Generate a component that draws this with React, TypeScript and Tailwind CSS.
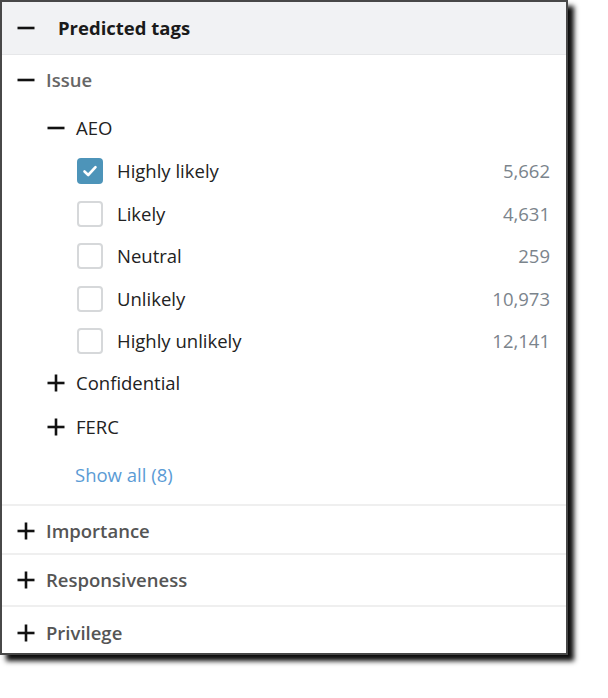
import React from "react";

const Minus = ({ className = "" }: { className?: string }) => (
  <svg width="18" height="18" viewBox="0 0 18 18" className={className}>
    <line x1="0.5" y1="9" x2="17.5" y2="9" stroke="#111" strokeWidth="2.6" />
  </svg>
);

const Plus = ({ className = "" }: { className?: string }) => (
  <svg width="18" height="18" viewBox="0 0 18 18" className={className}>
    <line x1="0.5" y1="9" x2="17.5" y2="9" stroke="#111" strokeWidth="2.6" />
    <line x1="9" y1="0.5" x2="9" y2="17.5" stroke="#111" strokeWidth="2.6" />
  </svg>
);

const Checkbox = ({ checked }: { checked?: boolean }) =>
  checked ? (
    <span className="flex h-[26px] w-[26px] items-center justify-center rounded-[4px] bg-[#4d94b9]">
      <svg width="16" height="16" viewBox="0 0 16 16">
        <path
          d="M2.5 8.5 L6.2 12 L13.5 4.2"
          fill="none"
          stroke="#fff"
          strokeWidth="2.6"
          strokeLinecap="round"
          strokeLinejoin="round"
        />
      </svg>
    </span>
  ) : (
    <span className="h-[26px] w-[26px] rounded-[4px] border-2 border-[#d6d8da] bg-white" />
  );

const options = [
  { label: "Highly likely", count: "5,662", checked: true, h: "h-[42px]" },
  { label: "Likely", count: "4,631", h: "h-[43px]" },
  { label: "Neutral", count: "259", h: "h-[42px]" },
  { label: "Unlikely", count: "10,973", h: "h-[43px]" },
  { label: "Highly unlikely", count: "12,141", h: "h-[42px]" },
];

const sections = [
  { title: "Importance", cls: "h-[49px] pt-[2px]" },
  { title: "Responsiveness", cls: "h-[52px]" },
  { title: "Privilege", cls: "h-[48px] pt-[5px]" },
];

export default function App() {
  return (
    <div className="min-h-[698px] bg-white">
      <div
        className="w-[568px] border-2 border-[#484848] bg-white text-[18.5px] shadow-[6px_6px_5px_rgba(0,0,0,0.95)]"
        style={{ fontFamily: '"Open Sans", "Noto Sans", sans-serif' }}
      >
        {/* header */}
        <div className="flex h-[53px] items-center border-b border-[#e6e7e9] bg-[#f1f2f4] pl-[15px]">
          <Minus />
          <span className="ml-[23px] font-bold text-[#1a1a1a]">Predicted tags</span>
        </div>

        {/* Issue */}
        <div className="flex h-[50px] items-center pl-[15px]">
          <Minus />
          <span className="ml-[11px] font-semibold text-[#666]">Issue</span>
        </div>

        <div className="flex h-[45px] items-center pl-[45px]">
          <Minus />
          <span className="ml-[11px] text-[#222]">AEO</span>
        </div>

        {options.map((o) => (
          <div key={o.label} className={`flex items-center pl-[75px] pr-[16px] ${o.h}`}>
            <Checkbox checked={o.checked} />
            <span className="ml-[14px] text-[#222]">{o.label}</span>
            <span className="ml-auto text-[#7b848c]">{o.count}</span>
          </div>
        ))}

        <div className="flex h-[42px] items-center pl-[45px]">
          <Plus />
          <span className="ml-[11px] text-[#222]">Confidential</span>
        </div>
        <div className="flex h-[46px] items-center pl-[45px]">
          <Plus />
          <span className="ml-[11px] text-[#222]">FERC</span>
        </div>
        <div className="flex h-[50px] items-center pl-[73px]">
          <span className="text-[#5b9bd5]">Show all (8)</span>
        </div>
        <div className="h-[4px]" />

        {sections.map((s) => (
          <div
            key={s.title}
            className={`flex items-center border-t-2 border-[#efefef] pl-[15px] ${s.cls}`}
          >
            <Plus />
            <span className="ml-[11px] font-semibold text-[#555]">{s.title}</span>
          </div>
        ))}
      </div>
    </div>
  );
}
